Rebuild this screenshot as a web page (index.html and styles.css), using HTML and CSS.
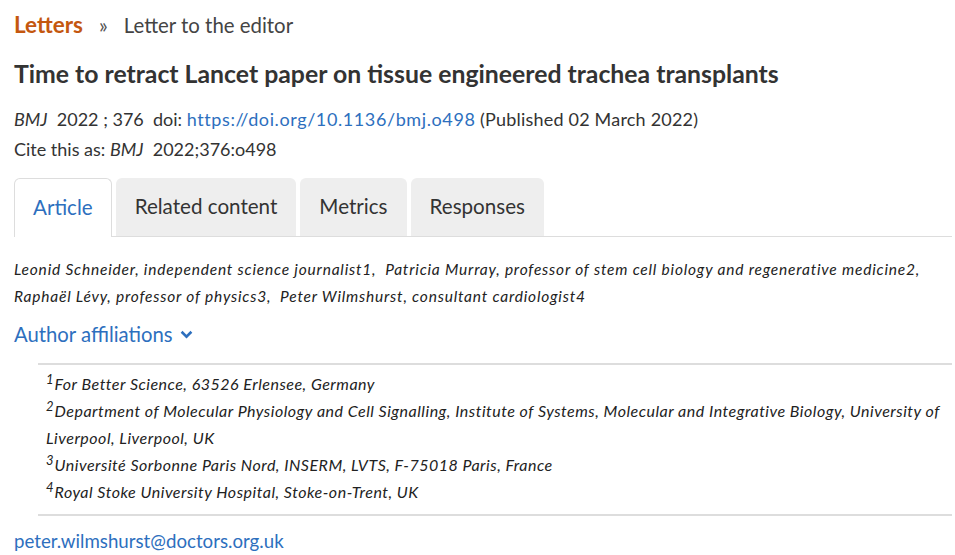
FILE: index.html
```html
<!DOCTYPE html>
<html lang="en">
<head>
<meta charset="utf-8">
<title>Time to retract Lancet paper on tissue engineered trachea transplants</title>
<link rel="stylesheet" href="styles.css">
</head>
<body>
<div class="page">
  <nav class="crumbs">
    <a class="crumb-section" href="#">Letters</a>
    <span class="crumb-sep">»</span>
    <span class="crumb-current">Letter to the editor</span>
  </nav>
  <h1 class="title">Time to retract Lancet paper on tissue engineered trachea transplants</h1>
  <div class="cite">
    <div><em>BMJ</em>&nbsp; 2022 ; 376 &nbsp;doi: <a class="doi" href="#">https://doi.org/10.1136/bmj.o498</a> <span class="pub">(Published 02 March 2022)</span></div>
    <div>Cite this as: <em>BMJ</em>&nbsp; 2022;376:o498</div>
  </div>
  <ul class="tabs">
    <li class="tab active">Article</li>
    <li class="tab">Related content</li>
    <li class="tab">Metrics</li>
    <li class="tab">Responses</li>
  </ul>
  <p class="authors">Leonid Schneider, independent science journalist1,&nbsp; Patricia Murray, professor of stem cell biology and regenerative medicine2,&nbsp; Raphaël Lévy, professor of physics3,&nbsp; Peter Wilmshurst, consultant cardiologist4</p>
  <a class="affil-toggle" href="#">Author affiliations <svg class="chev" width="13" height="9" viewBox="0 0 13 9"><path d="M1.6 1.8 L6.5 6.6 L11.4 1.8" fill="none" stroke="currentColor" stroke-width="2.6"/></svg></a>
  <ol class="affils">
    <li><sup>1</sup>For Better Science, 63526 Erlensee, Germany</li>
    <li><sup>2</sup>Department of Molecular Physiology and Cell Signalling, Institute of Systems, Molecular and Integrative Biology, University of Liverpool, Liverpool, UK</li>
    <li><sup>3</sup>Université Sorbonne Paris Nord, INSERM, LVTS, F-75018 Paris, France</li>
    <li><sup>4</sup>Royal Stoke University Hospital, Stoke-on-Trent, UK</li>
  </ol>
  <a class="email" href="#">peter.wilmshurst@doctors.org.uk</a>
</div>
</body>
</html>
```
FILE: styles.css
```css
html, body {
  margin: 0;
  padding: 0;
  background: #fff;
}
body {
  font-family: Lato, "Open Sans", sans-serif;
  color: #333;
}
a {
  color: #2d6fbe;
  text-decoration: none;
}
.page {
  padding: 11px 3px 0 14px;
}
.crumbs {
  font-size: 20.4px;
  line-height: 28px;
  color: #444;
  display: flex;
  align-items: baseline;
  gap: 16px;
}
.crumb-section {
  color: #c4570f;
  font-weight: 700;
  font-size: 22.5px;
}
.crumb-sep {
  color: #555;
}
.title {
  margin: 20px 0 0;
  font-size: 24.8px;
  line-height: 30px;
  font-weight: 700;
  color: #333;
}
.cite {
  margin-top: 15px;
  font-size: 18px;
  line-height: 30px;
  color: #333;
}
.doi {
  letter-spacing: 0.6px;
}
.pub {
  letter-spacing: 0.2px;
}
.tabs {
  list-style: none;
  margin: 14px 0 0;
  padding: 0;
  display: flex;
  gap: 4px;
  border-bottom: 1px solid #ddd;
}
.tab {
  height: 58px;
  box-sizing: border-box;
  padding: 0 19px 3px;
  display: flex;
  align-items: center;
  font-size: 20.6px;
  background: #eee;
  border-radius: 6px 6px 0 0;
  color: #333;
}
.tab.active {
  background: #fff;
  color: #2d6fbe;
  border: 1px solid #ddd;
  border-bottom: 0;
  margin-bottom: -1px;
  height: 59px;
  padding: 0 18px 2px;
}
.authors {
  margin: 19px 0 0;
  font-style: italic;
  font-size: 15.5px;
  letter-spacing: 0.8px;
  line-height: 27px;
  color: #222;
}
.affil-toggle {
  display: inline-flex;
  align-items: center;
  gap: 7px;
  margin-top: 10px;
  font-size: 20.3px;
  line-height: 28px;
}
.chev {
  display: block;
  margin-top: 1px;
}
.affils {
  list-style: none;
  margin: 15px 0 0 24px;
  padding: 5px 0 9px 8px;
  border-top: 2px solid #ddd;
  border-bottom: 2px solid #ddd;
  font-style: italic;
  font-size: 16px;
  letter-spacing: 0.5px;
  line-height: 27px;
  color: #222;
}
.affils sup {
  font-size: 13px;
  line-height: 0;
  vertical-align: 6px;
  letter-spacing: 0;
  margin-right: 1px;
}
.email {
  display: block;
  margin-top: 13px;
  font-size: 18.7px;
  line-height: 24px;
}
```
